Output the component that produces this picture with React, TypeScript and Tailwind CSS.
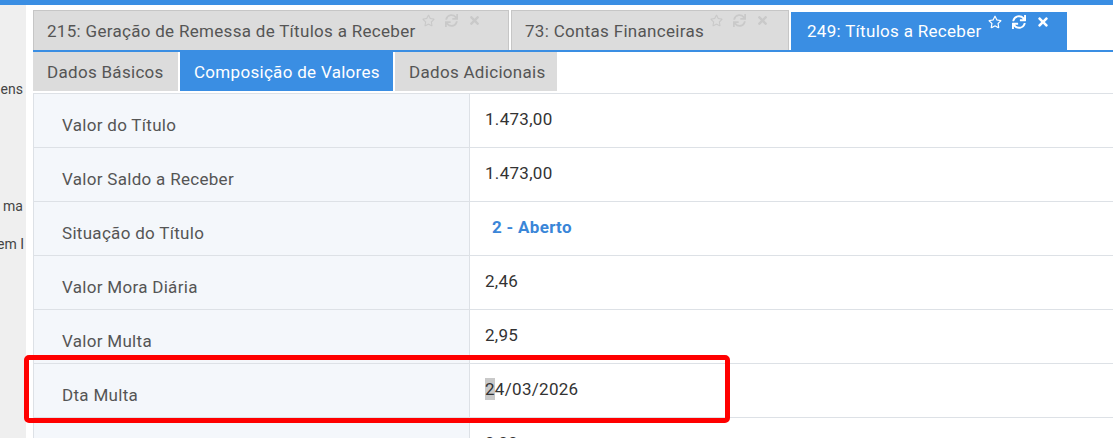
import { FaRegStar, FaSync, FaTimes } from "react-icons/fa";

type Row = { label: string; value: string; kind?: "status" | "date" };

const ROWS: Row[] = [
  { label: "Valor do Título", value: "1.473,00" },
  { label: "Valor Saldo a Receber", value: "1.473,00" },
  { label: "Situação do Título", value: "2 - Aberto", kind: "status" },
  { label: "Valor Mora Diária", value: "2,46" },
  { label: "Valor Multa", value: "2,95" },
  { label: "Dta Multa", value: "24/03/2026", kind: "date" },
  { label: "", value: "0,00" },
];

const TABS = [
  { title: "215: Geração de Remessa de Títulos a Receber", width: "w-[476px]", active: false },
  { title: "73: Contas Financeiras", width: "w-[278px]", active: false },
  { title: "249: Títulos a Receber", width: "w-[276px]", active: true },
];

function TabIcons({ active }: { active: boolean }) {
  const cls = active ? "text-white" : "text-[#c9c9c9]";
  return (
    <div className={`ml-[6px] flex items-center gap-[10px] self-start pt-[3px] ${cls}`}>
      <FaRegStar size={active ? 14 : 13} />
      <FaSync size={active ? 14 : 13} />
      <FaTimes size={active ? 14 : 13} />
    </div>
  );
}

export default function App() {
  return (
    <div className="relative h-[438px] w-[1113px] overflow-hidden bg-white font-['Roboto',sans-serif] text-[17px] leading-[24px] tracking-[0.3px]">
      <div className="h-[5px] bg-[#3a8ee3]" />

      <div className="flex">
        {/* menu lateral recolhido */}
        <aside className="h-[433px] w-[26px] shrink-0 overflow-hidden bg-[#efefef] text-[14px] tracking-normal text-[#444]">
          <div className="mt-[72px] flex h-[20px] justify-end whitespace-nowrap pr-[3px]">ens</div>
          <div className="mt-[97px] flex h-[20px] justify-end whitespace-nowrap pr-[3px]">ma</div>
          <div className="mt-[18px] flex h-[20px] justify-end whitespace-nowrap pr-[2px]">em I</div>
        </aside>
        <div className="w-[7px] shrink-0" />

        <main className="min-w-0 flex-1">
          {/* abas de janelas */}
          <div className="flex h-[45px] items-end gap-[2px] pt-[5px]">
            {TABS.map(t => (
              <div
                key={t.title}
                className={`flex shrink-0 items-center ${t.width} ${
                  t.active
                    ? "h-[38px] bg-[#3a8ee3] pl-[16px] text-white"
                    : "h-[40px] border border-b-0 border-[#c6c6c6] bg-[#dcdcdc] pl-[13px] text-[#555]"
                }`}
              >
                <span className="whitespace-nowrap">{t.title}</span>
                <TabIcons active={t.active} />
              </div>
            ))}
          </div>
          <div className="h-[2px] bg-[#3a8ee3]" />

          {/* sub-abas */}
          <div className="flex h-[39px] gap-[2px]">
            <div className="flex w-[145px] items-center bg-[#dcdcdc] pl-[14px] text-[#555]">Dados Básicos</div>
            <div className="flex w-[213px] items-center bg-[#3a8ee3] pl-[14px] text-white">Composição de Valores</div>
            <div className="flex w-[162px] items-center bg-[#dcdcdc] pl-[14px] text-[#555]">Dados Adicionais</div>
          </div>

          {/* grade de valores */}
          <div className="mt-[2px] border-l border-t border-[#dde1e6]">
            {ROWS.map(r => (
              <div key={r.label + r.value} className="flex h-[54px] border-b border-[#dde1e6]">
                <div className="flex w-[436px] shrink-0 items-end border-r border-[#dde1e6] bg-[#f4f7fb] pb-[10px] pl-[28px] text-[#555]">
                  {r.label}
                </div>
                <div className="flex-1 pl-[15px] pt-[13px] text-[#333]">
                  {r.kind === "status" ? (
                    <span className="pl-[7px] font-bold text-[#3a86d8]">{r.value}</span>
                  ) : r.kind === "date" ? (
                    <span>
                      <span className="inline-block bg-[#c9c9c9] leading-[22px]">{r.value[0]}</span>
                      {r.value.slice(1)}
                    </span>
                  ) : (
                    r.value
                  )}
                </div>
              </div>
            ))}
          </div>
        </main>
      </div>

      {/* destaque vermelho */}
      <div className="absolute left-[24px] top-[355px] h-[68px] w-[706px] rounded-[5px] border-[5px] border-[#ff0000]" />
    </div>
  );
}
